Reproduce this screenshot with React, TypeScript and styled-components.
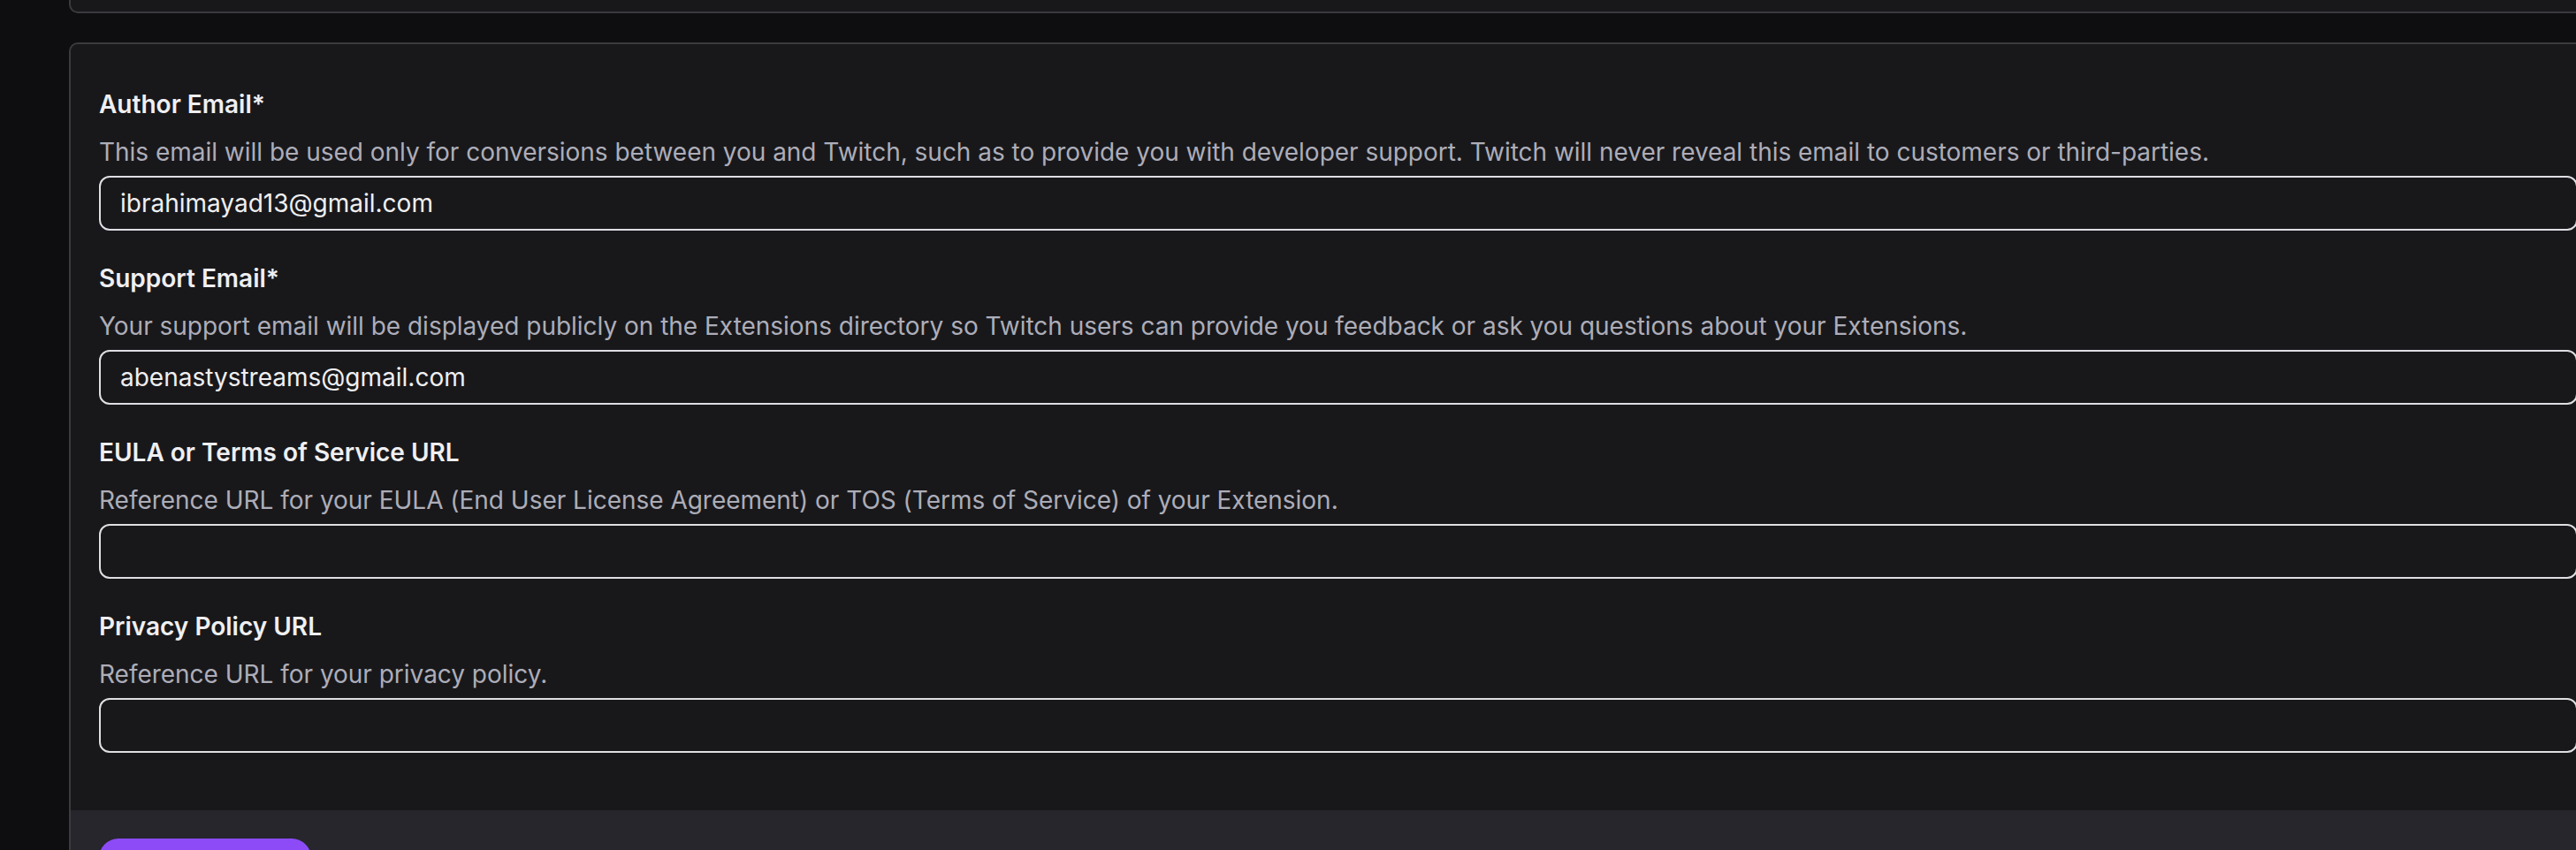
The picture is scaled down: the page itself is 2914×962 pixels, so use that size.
import React from "react";
import styled, { createGlobalStyle } from "styled-components";

const Global = createGlobalStyle`
  html, body {
    margin: 0;
    padding: 0;
    background: #0e0e10;
    overflow: hidden;
    height: 962px;
  }
  body {
    font-family: Inter, "Noto Sans", sans-serif;
    color: #efeff1;
    -webkit-font-smoothing: antialiased;
  }
  * { box-sizing: border-box; }
`;

const Page = styled.div`
  display: flex;
  flex-direction: column;
  gap: 33px;
  padding-left: 78px;
  width: 3000px;
`;

const PrevCard = styled.div`
  width: 2900px;
  height: 15px;
  background: #18181b;
  border: 2px solid #3a3a3f;
  border-top: none;
  border-radius: 0 0 10px 10px;
`;

const Card = styled.section`
  width: 2872px;
  background: #18181b;
  border: 2px solid #3a3a3f;
  border-radius: 10px;
  overflow: hidden;
`;

const Body = styled.div`
  display: flex;
  flex-direction: column;
  gap: 36px;
  padding: 50px 32px 65px 32px;
`;

const Field = styled.div`
  display: flex;
  flex-direction: column;
`;

const Label = styled.label`
  font-size: 28px;
  line-height: 36px;
  font-weight: 600;
  color: #efeff1;
  margin-bottom: 18px;
`;

const Hint = styled.p`
  margin: 0 0 9px 0;
  font-size: 28px;
  letter-spacing: -0.02px;
  line-height: 36px;
  font-weight: 400;
  color: #adadb8;
  white-space: nowrap;
`;

const Input = styled.input`
  height: 62px;
  width: 100%;
  background: #18181b;
  border: 2px solid #dedee3;
  border-radius: 12px;
  padding: 0 22px;
  font-family: Inter, "Noto Sans", sans-serif;
  font-size: 28px;
  color: #efeff1;
  outline: none;
`;

const Footer = styled.div`
  background: #26262c;
  padding: 32px 32px;
  display: flex;
`;

const SaveButton = styled.button`
  height: 60px;
  width: 240px;
  border: none;
  border-radius: 22px;
  background: #8c4bf6;
  color: #ffffff;
  font-family: Inter, "Noto Sans", sans-serif;
  font-size: 26px;
  font-weight: 600;
`;

const fields = [
  {
    label: "Author Email*",
    hint:
      "This email will be used only for conversions between you and Twitch, such as to provide you with developer support. Twitch will never reveal this email to customers or third-parties.",
    value: "ibrahimayad13@gmail.com",
  },
  {
    label: "Support Email*",
    hint:
      "Your support email will be displayed publicly on the Extensions directory so Twitch users can provide you feedback or ask you questions about your Extensions.",
    value: "abenastystreams@gmail.com",
  },
  {
    label: "EULA or Terms of Service URL",
    hint:
      "Reference URL for your EULA (End User License Agreement) or TOS (Terms of Service) of your Extension.",
    value: "",
  },
  {
    label: "Privacy Policy URL",
    hint: "Reference URL for your privacy policy.",
    value: "",
  },
];

export default function App() {
  return (
    <>
      <Global />
      <Page>
        <PrevCard />
        <Card>
          <Body>
            {fields.map((f) => (
              <Field key={f.label}>
                <Label>{f.label}</Label>
                <Hint>{f.hint}</Hint>
                <Input defaultValue={f.value} />
              </Field>
            ))}
          </Body>
          <Footer>
            <SaveButton>Save Changes</SaveButton>
          </Footer>
        </Card>
      </Page>
    </>
  );
}
